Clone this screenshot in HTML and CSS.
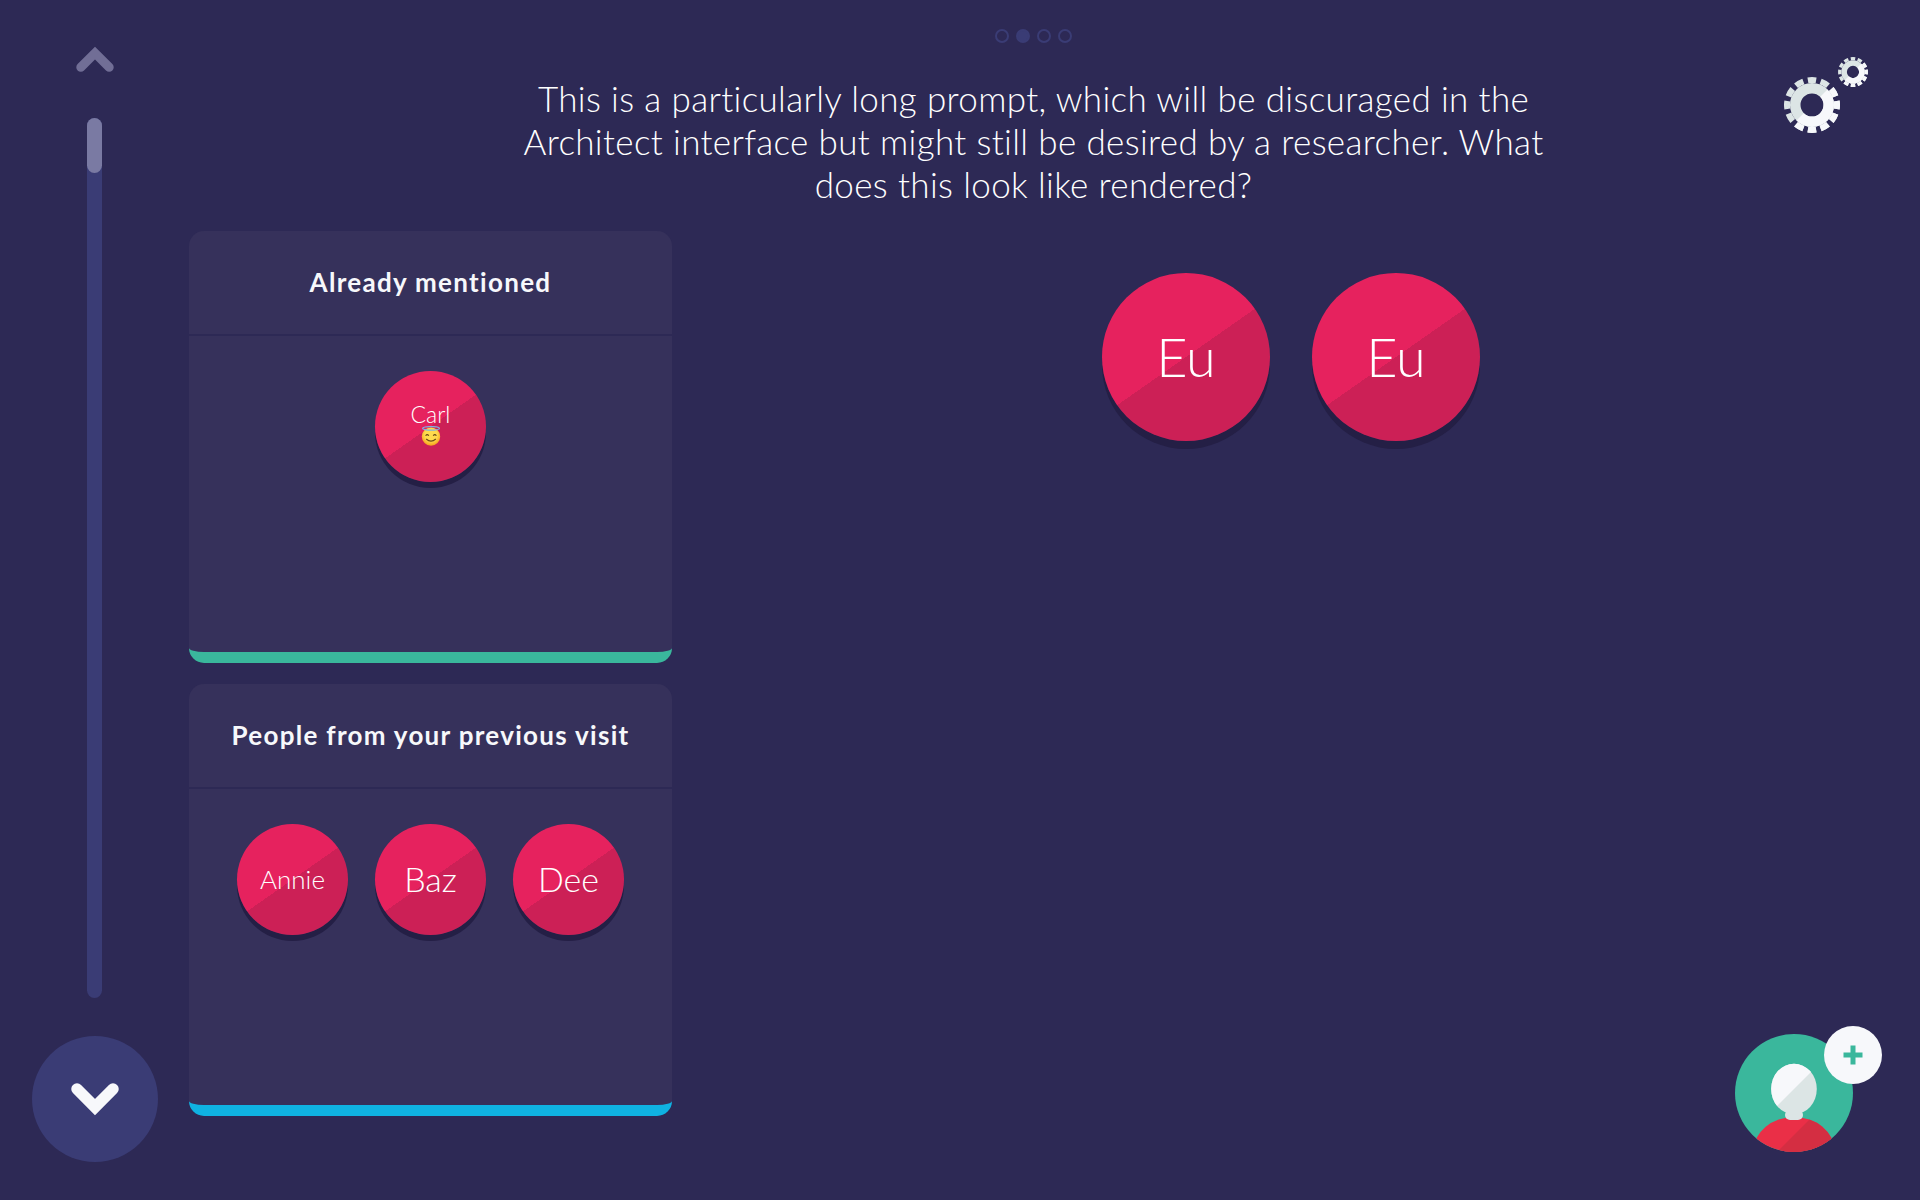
FILE: index.html
```html
<!DOCTYPE html>
<html lang="en">
<head>
    <meta charset="UTF-8">
    <meta name="viewport" content="width=device-width, initial-scale=1.0">
    <title>Name Generator</title>
    <link rel="stylesheet" href="styles.css">
</head>
<body>

    <svg class="defs" width="0" height="0">
        <defs>
            <clipPath id="gearLight"><polygon points="60,0 60,60 0,60"/></clipPath>
            <clipPath id="avatarClip"><circle cx="59" cy="67" r="59"/></clipPath>
            <clipPath id="headLight"><polygon points="0,0 122,0 0,122"/></clipPath>
            <clipPath id="bodyDark"><polygon points="42,126 148,20 148,126"/></clipPath>
            <radialGradient id="emojiFace" cx="0.5" cy="0.4" r="0.6">
                <stop offset="0.55" stop-color="#ffdb4d"/>
                <stop offset="1" stop-color="#f59e1b"/>
            </radialGradient>
            <symbol id="gear" viewBox="0 0 60 60">
                <g fill="none" stroke="#dce5e5">
                    <circle cx="30" cy="30" r="16.75" stroke-width="10.5"/>
                    <circle cx="30" cy="30" r="25" stroke-width="6" pathLength="120" stroke-dasharray="6.5 3.5" stroke-dashoffset="3.25"/>
                </g>
                <g fill="none" stroke="#f7f8fb" clip-path="url(#gearLight)">
                    <circle cx="30" cy="30" r="16.75" stroke-width="10.5"/>
                    <circle cx="30" cy="30" r="25" stroke-width="6" pathLength="120" stroke-dasharray="6.5 3.5" stroke-dashoffset="3.25"/>
                </g>
            </symbol>
            <symbol id="chevron" viewBox="0 0 48 33">
                <polyline points="6,6 24,24 42,6" fill="none" stroke="currentColor" stroke-width="11.5" stroke-linecap="round"/>
            </symbol>
        </defs>
    </svg>

    <div class="sidebar">
        <svg class="chevron-up"><use href="#chevron"/></svg>
        <div class="scroll-track">
            <div class="scroll-thumb"></div>
        </div>
        <div class="next-button">
            <svg class="chevron-down"><use href="#chevron"/></svg>
        </div>
    </div>

    <div class="main">
        <div class="pips">
            <span class="pip"></span>
            <span class="pip pip-active"></span>
            <span class="pip"></span>
            <span class="pip"></span>
        </div>

        <h1 class="prompt">This is a particularly long prompt, which will be discuraged in the<br>Architect interface but might still be desired by a researcher. What<br>does this look like rendered?</h1>

        <div class="content">
            <div class="panels">
                <div class="panel panel-green">
                    <div class="panel-title">Already mentioned</div>
                    <div class="panel-nodes">
                        <div class="node node-small node-emoji">
                            <span class="label-carl">Carl</span>
                            <svg class="emoji" viewBox="0 0 20 20">
                                <circle cx="10" cy="10.6" r="9.2" fill="url(#emojiFace)"/>
                                <path d="M4.6 9.8q1.6-2.4 3.2 0M12.200 9.800q1.600-2.400 3.200 0" fill="none" stroke="#6b4a16" stroke-width="1.1"/>
                                <path d="M5.200 13q4.800 4.200 9.600 0" fill="none" stroke="#6b4a16" stroke-width="1.1"/>
                                <ellipse cx="10" cy="2.400" rx="8.400" ry="1.800" fill="none" stroke="#7fb3e0" stroke-width="1.300"/>
                            </svg>
                        </div>
                    </div>
                </div>
                <div class="panel panel-blue">
                    <div class="panel-title">People from your previous visit</div>
                    <div class="panel-nodes">
                        <div class="node node-small"><span class="label-long">Annie</span></div>
                        <div class="node node-small">Baz</div>
                        <div class="node node-small">Dee</div>
                    </div>
                </div>
            </div>

            <div class="node-list">
                <div class="node node-large">Eu</div>
                <div class="node node-large">Eu</div>
            </div>
        </div>
    </div>

    <svg class="gears" viewBox="0 0 90 79">
        <use href="#gear" x="0" y="19" width="60" height="60"/>
        <use href="#gear" x="55" y="0" width="32" height="32"/>
    </svg>

    <svg class="add-person" viewBox="0 0 148 126">
        <circle cx="59" cy="67" r="59" fill="#3ab79c"/>
        <g clip-path="url(#avatarClip)">
            <ellipse cx="59" cy="124" rx="40" ry="33" fill="#ea2f47"/>
            <g clip-path="url(#bodyDark)">
                <ellipse cx="59" cy="124" rx="40" ry="33" fill="#d42e42"/>
            </g>
        </g>
        <rect x="50" y="84" width="18" height="10" rx="5" fill="#dce5e5"/>
        <ellipse cx="59" cy="63" rx="22.8" ry="25.3" fill="#dce5e5"/>
        <ellipse cx="59" cy="63" rx="22.8" ry="25.3" fill="#f7f8fb" clip-path="url(#headLight)"/>
        <circle cx="118" cy="29" r="29" fill="#f7f8fb"/>
        <path d="M118 19.5v19M108.500 29h19" stroke="#3ab79c" stroke-width="5"/>
    </svg>

</body>
</html>
```

FILE: styles.css
```css
* {
    box-sizing: border-box;
}
body {
    margin: 0;
    width: 1920px;
    height: 1200px;
    overflow: hidden;
    display: flex;
    position: relative;
    background-color: #2d2955;
    color: #f7f8fb;
    font-family: Lato, sans-serif;
}
.defs {
    position: absolute;
}

.sidebar {
    width: 189px;
    flex-shrink: 0;
    display: flex;
    flex-direction: column;
    align-items: center;
    padding-top: 46px;
}
.chevron-up {
    width: 38px;
    height: 26px;
    color: #716e96;
    transform: rotate(180deg);
}
.scroll-track {
    width: 15px;
    height: 880px;
    margin-top: 46px;
    border-radius: 8px;
    background-color: #3a3c75;
}
.scroll-thumb {
    height: 55px;
    border-radius: 8px;
    background-color: #7a7aa3;
}
.next-button {
    width: 126px;
    height: 126px;
    margin-top: 38px;
    border-radius: 50%;
    background-color: #3a3c75;
    display: flex;
    align-items: center;
    justify-content: center;
}
.chevron-down {
    width: 48px;
    height: 33px;
    color: #f7f8fb;
}

.main {
    flex: 1;
    padding-right: 42px;
    padding-top: 29px;
}
.pips {
    display: flex;
    justify-content: center;
    gap: 7px;
}
.pip {
    width: 14px;
    height: 14px;
    border: 2px solid #3a3c75;
    border-radius: 50%;
}
.pip-active {
    background-color: #3a3c75;
}
.prompt {
    margin: 34px 0 25px;
    color: #ffffff;
    font-size: 35px;
    font-weight: 300;
    letter-spacing: 0.36px;
    line-height: 43px;
    text-align: center;
}

.content {
    display: flex;
}
.panels {
    width: 483px;
    flex-shrink: 0;
    display: flex;
    flex-direction: column;
    gap: 21px;
}
.panel {
    height: 432px;
    border-radius: 15px;
    border-bottom: 11px solid;
    background-color: #36315b;
}
.panel-green {
    border-bottom-color: #3ab79c;
}
.panel-blue {
    border-bottom-color: #0fb2e2;
}
.panel-title {
    height: 105px;
    padding-bottom: 2px;
    border-bottom: 2px solid #2d2955;
    display: flex;
    align-items: center;
    justify-content: center;
    font-size: 26px;
    font-weight: 700;
    letter-spacing: 1.3px;
}
.panel-nodes {
    display: flex;
    justify-content: center;
    gap: 27px;
    padding-top: 35px;
}

.node {
    flex-shrink: 0;
    border-radius: 50%;
    display: flex;
    flex-direction: column;
    align-items: center;
    justify-content: center;
    color: #ffffff;
    font-weight: 300;
    background: linear-gradient(145deg, #e6225e 50%, #cc2056 50%);
}
.node-small {
    width: 111px;
    height: 111px;
    padding-bottom: 2px;
    font-size: 34px;
    box-shadow: 0 6px 0 #241f45;
}
.node-emoji {
    padding-bottom: 6px;
}
.node-large {
    width: 168px;
    height: 168px;
    padding-bottom: 2px;
    font-size: 54px;
    box-shadow: 0 8px 0 #241f45;
}
.label-long {
    font-size: 26px;
}
.label-carl {
    font-size: 23px;
    line-height: 24px;
}
.emoji {
    width: 20px;
    height: 20px;
}
.node-list {
    flex: 1;
    display: flex;
    justify-content: center;
    align-items: flex-start;
    gap: 42px;
    margin-left: 32px;
    padding-top: 42px;
}

.gears {
    position: absolute;
    left: 1782px;
    top: 56px;
    width: 90px;
    height: 79px;
}
.add-person {
    position: absolute;
    left: 1735px;
    top: 1026px;
    width: 148px;
    height: 126px;
}
```
